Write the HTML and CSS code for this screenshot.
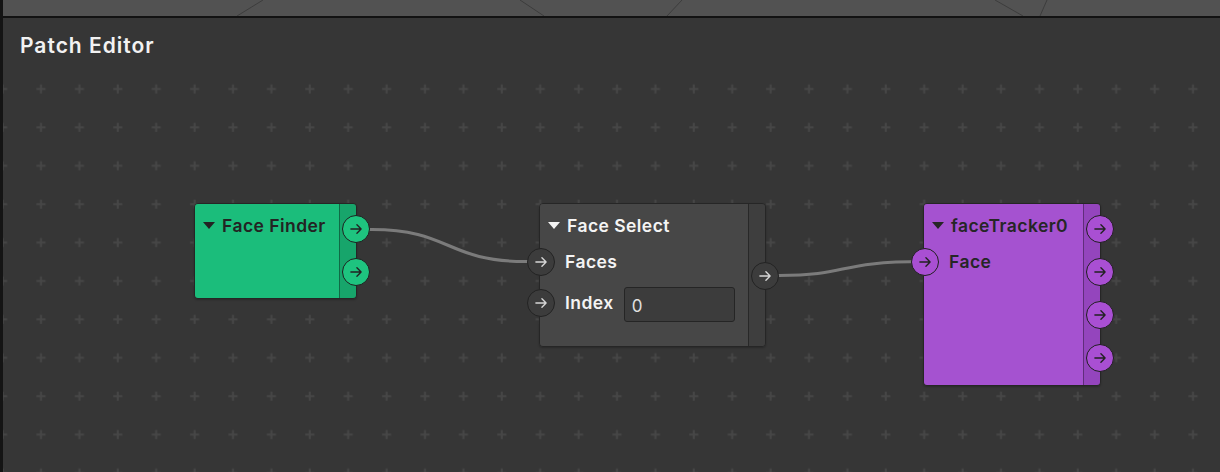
FILE: index.html
```html
<!DOCTYPE html>
<html>
<head>
<meta charset="utf-8">
<title>Patch Editor</title>
<link rel="stylesheet" href="styles.css">
</head>
<body>
<div class="app">
  <div class="topbar">
    <svg class="mesh" width="1217" height="16" viewBox="0 0 1217 16">
      <g stroke="#3d3d3d" stroke-width="1" fill="none">
        <line x1="234" y1="16" x2="260" y2="0"/>
        <line x1="517" y1="0" x2="541" y2="16"/>
        <line x1="664" y1="16" x2="679" y2="0"/>
        <line x1="992" y1="0" x2="1020" y2="16"/>
        <line x1="1037" y1="16" x2="1044" y2="0"/>
      </g>
    </svg>
  </div>
  <div class="panel">
    <div class="panel-header">Patch Editor</div>
    <div class="canvas">
      <svg class="grid" width="1217" height="402">
        <defs>
          <pattern id="plus" width="38.4" height="38.4" patternUnits="userSpaceOnUse" x="18.5" y="0">
            <rect x="15" y="18" width="9" height="2" fill="#464646"/>
            <rect x="18.5" y="14.5" width="2" height="9" fill="#464646"/>
          </pattern>
        </defs>
        <rect width="1217" height="402" fill="url(#plus)"/>
      </svg>
      <svg class="wires" width="1217" height="402">
        <g stroke="#7b7b7b" stroke-width="3" fill="none">
          <path d="M355 159.5 L369 159.5 C447 159.5 444 191.5 522 191.5 L538 191.5"/>
          <path d="M763 205.5 L776 205.5 C848 205.5 832 191.5 922 191.5"/>
        </g>
      </svg>

      <div class="node node-green" style="left:191px;top:133px;width:163px;height:96px">
        <div class="node-body">
          <div class="node-title"><span class="caret"></span>Face Finder</div>
        </div>
        <div class="node-strip">
          <span class="port port-green"><svg viewBox="0 0 28 28"><path d="M8.5 14 H19.5 M15 9.5 L19.5 14 L15 18.5"/></svg></span>
          <span class="port port-green"><svg viewBox="0 0 28 28"><path d="M8.5 14 H19.5 M15 9.5 L19.5 14 L15 18.5"/></svg></span>
        </div>
      </div>

      <div class="node node-gray" style="left:536px;top:133px;width:227px;height:144px">
        <div class="node-body">
          <div class="node-title"><span class="caret"></span>Face Select</div>
          <div class="node-row">
            <span class="port port-dark port-in"><svg viewBox="0 0 28 28"><path d="M8.5 14 H19.5 M15 9.5 L19.5 14 L15 18.5"/></svg></span>
            <span class="row-label">Faces</span>
          </div>
          <div class="node-row">
            <span class="port port-dark port-in"><svg viewBox="0 0 28 28"><path d="M8.5 14 H19.5 M15 9.5 L19.5 14 L15 18.5"/></svg></span>
            <span class="row-label">Index</span>
            <span class="value-box">0</span>
          </div>
        </div>
        <div class="node-strip strip-low">
          <span class="port port-dark"><svg viewBox="0 0 28 28"><path d="M8.5 14 H19.5 M15 9.5 L19.5 14 L15 18.5"/></svg></span>
        </div>
      </div>

      <div class="node node-purple" style="left:920px;top:133px;width:178px;height:183px">
        <div class="node-body">
          <div class="node-title"><span class="caret"></span>faceTracker0</div>
          <div class="node-row">
            <span class="port port-purple port-in"><svg viewBox="0 0 28 28"><path d="M8.5 14 H19.5 M15 9.5 L19.5 14 L15 18.5"/></svg></span>
            <span class="row-label">Face</span>
          </div>
        </div>
        <div class="node-strip">
          <span class="port port-purple"><svg viewBox="0 0 28 28"><path d="M8.5 14 H19.5 M15 9.5 L19.5 14 L15 18.5"/></svg></span>
          <span class="port port-purple"><svg viewBox="0 0 28 28"><path d="M8.5 14 H19.5 M15 9.5 L19.5 14 L15 18.5"/></svg></span>
          <span class="port port-purple"><svg viewBox="0 0 28 28"><path d="M8.5 14 H19.5 M15 9.5 L19.5 14 L15 18.5"/></svg></span>
          <span class="port port-purple"><svg viewBox="0 0 28 28"><path d="M8.5 14 H19.5 M15 9.5 L19.5 14 L15 18.5"/></svg></span>
        </div>
      </div>
    </div>
  </div>
</div>
</body>
</html>
```

FILE: styles.css
```css
* { box-sizing: border-box; }
html, body {
  margin: 0;
  padding: 0;
  background: #363636;
}
body {
  width: 1220px;
  height: 472px;
  overflow: hidden;
  font-family: Inter, "Noto Sans", "Liberation Sans", sans-serif;
}
.app {
  width: 1220px;
  height: 472px;
  display: flex;
  flex-direction: column;
  border-left: 3px solid #141414;
}
.topbar {
  height: 18px;
  flex: none;
  background: #525252;
  border-bottom: 2px solid #121212;
  overflow: hidden;
}
.mesh { display: block; }
.panel {
  flex: 1;
  display: flex;
  flex-direction: column;
  background: #363636;
  min-height: 0;
}
.panel-header {
  height: 52px;
  flex: none;
  padding: 15px 0 0 17px;
  color: #f2f2f2;
  font-size: 21px;
  font-weight: 600;
  letter-spacing: 1px;
  line-height: 1.2;
}
.canvas {
  position: relative;
  flex: 1;
  overflow: hidden;
}
.grid, .wires {
  position: absolute;
  left: 0;
  top: 0;
}
.node {
  position: absolute;
  display: flex;
  border-radius: 4px;
  border: 1px solid #262626;
  box-shadow: 0 1px 2px rgba(0,0,0,0.25);
}
.node-body {
  flex: 1;
  display: flex;
  flex-direction: column;
  padding-top: 6px;
  border-radius: 3px 0 0 3px;
}
.node-strip {
  width: 17px;
  flex: none;
  display: flex;
  flex-direction: column;
  gap: 15px;
  padding-top: 11px;
  border-left: 1px solid rgba(0,0,0,0.35);
  border-radius: 0 3px 3px 0;
}
.node-strip .port { margin-left: 2px; }
.strip-low { padding-top: 58px; }
.node-title {
  height: 31px;
  display: flex;
  align-items: center;
  padding-left: 8px;
  font-size: 17.5px;
  font-weight: 600;
  letter-spacing: 0.45px;
}
.caret {
  width: 0;
  height: 0;
  border-left: 6px solid transparent;
  border-right: 6px solid transparent;
  border-top: 7px solid currentColor;
  margin-right: 7px;
}
.node-row {
  height: 41px;
  display: flex;
  align-items: center;
}
.row-label {
  font-size: 17.5px;
  font-weight: 600;
  letter-spacing: 0.45px;
}
.port {
  width: 28px;
  height: 28px;
  flex: none;
  border-radius: 50%;
  border: 1.5px solid #1f1f1f;
  display: flex;
  align-items: center;
  justify-content: center;
  position: relative;
  z-index: 2;
}
.port svg {
  width: 28px;
  height: 28px;
  fill: none;
  stroke-width: 1.5;
  stroke-linecap: round;
  stroke-linejoin: round;
}
.port-in {
  margin-left: -13px;
  margin-right: 10px;
}
.value-box {
  width: 111px;
  height: 35px;
  margin-left: 10px;
  margin-top: 4px;
  border: 1.5px solid #252525;
  border-radius: 3px;
  background: #3c3c3c;
  color: #e0e0e0;
  font-size: 17px;
  font-weight: 400;
  display: flex;
  align-items: center;
  padding: 3px 0 0 7px;
}

/* green */
.node-green .node-body { background: #1bbd7b; }
.node-green .node-strip { background: #17a56b; }
.node-green { color: #232323; }
.port-green { background: #1ec47f; }
.port-green svg { stroke: #222; }

/* gray */
.node-gray .node-body { background: #474747; }
.node-gray .node-strip { background: #3e3e3e; }
.node-gray { color: #f4f4f4; }
.port-dark { background: #3c3c3c; border-color: #232323; }
.port-dark svg { stroke: #d6d6d6; }

/* purple */
.node-purple .node-body { background: #a552d0; }
.node-purple .node-strip { background: #9445bd; }
.node-purple { color: #262626; }
.port-purple { background: #a94fd3; }
.port-purple svg { stroke: #222; }
```
